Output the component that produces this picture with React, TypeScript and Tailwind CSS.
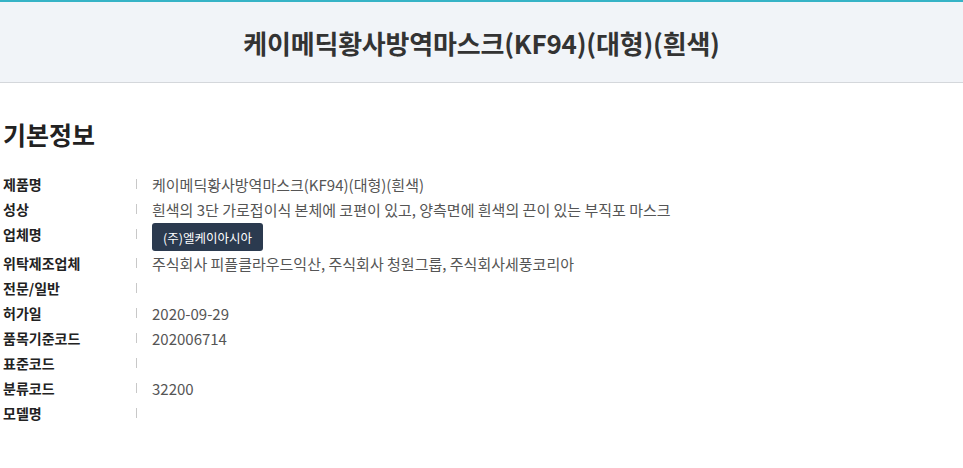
import React from 'react';

type Row = {
  label: string;
  value?: string;
  company?: string;
};

const rows: Row[] = [
  { label: '제품명', value: '케이메딕황사방역마스크(KF94)(대형)(흰색)' },
  { label: '성상', value: '흰색의 3단 가로접이식 본체에 코편이 있고, 양측면에 흰색의 끈이 있는 부직포 마스크' },
  { label: '업체명', company: '(주)엘케이아시아' },
  { label: '위탁제조업체', value: '주식회사 피플클라우드익산, 주식회사 청원그룹, 주식회사세풍코리아' },
  { label: '전문/일반' },
  { label: '허가일', value: '2020-09-29' },
  { label: '품목기준코드', value: '202006714' },
  { label: '표준코드' },
  { label: '분류코드', value: '32200' },
  { label: '모델명' },
];

export default function App() {
  return (
    <div className="w-[963px] h-[468px] bg-white overflow-hidden font-['Noto_Sans_CJK_KR','Noto_Sans',sans-serif]">
      {/* Title bar */}
      <div className="h-[83px] border-t-[2px] border-t-[#36b3c6] border-b border-b-[#d4d7db] bg-[#f1f4f8] flex items-center justify-center">
        <h1 className="text-[26px] font-bold text-[#333] tracking-[-0.2px]">
          케이메딕황사방역마스크(KF94)(대형)(흰색)
        </h1>
      </div>

      {/* Basic info */}
      <div className="h-[385px] border-b border-[#dcdcdc] pl-[3px]">
        <h2 className="mt-[34px] text-[25px] font-bold text-[#222] leading-[34px]">기본정보</h2>

        <dl className="mt-[21px] flex flex-col">
          {rows.map((row) => (
            <div key={row.label} className="flex items-start leading-[25px]">
              <dt className="w-[133px] shrink-0 text-[14px] font-bold text-[#222]">{row.label}</dt>
              <span className="mt-[7px] w-px h-[10px] bg-[#c8c8c8] shrink-0" />
              <dd className="ml-[15px] text-[15px] text-[#555]">
                {row.company ? (
                  <span className="mt-[1px] inline-flex items-center h-[28px] px-[11px] rounded-[3px] bg-[#2b3a4f] text-white text-[12.5px]">
                    {row.company}
                  </span>
                ) : (
                  row.value
                )}
              </dd>
            </div>
          ))}
        </dl>
      </div>
    </div>
  );
}
